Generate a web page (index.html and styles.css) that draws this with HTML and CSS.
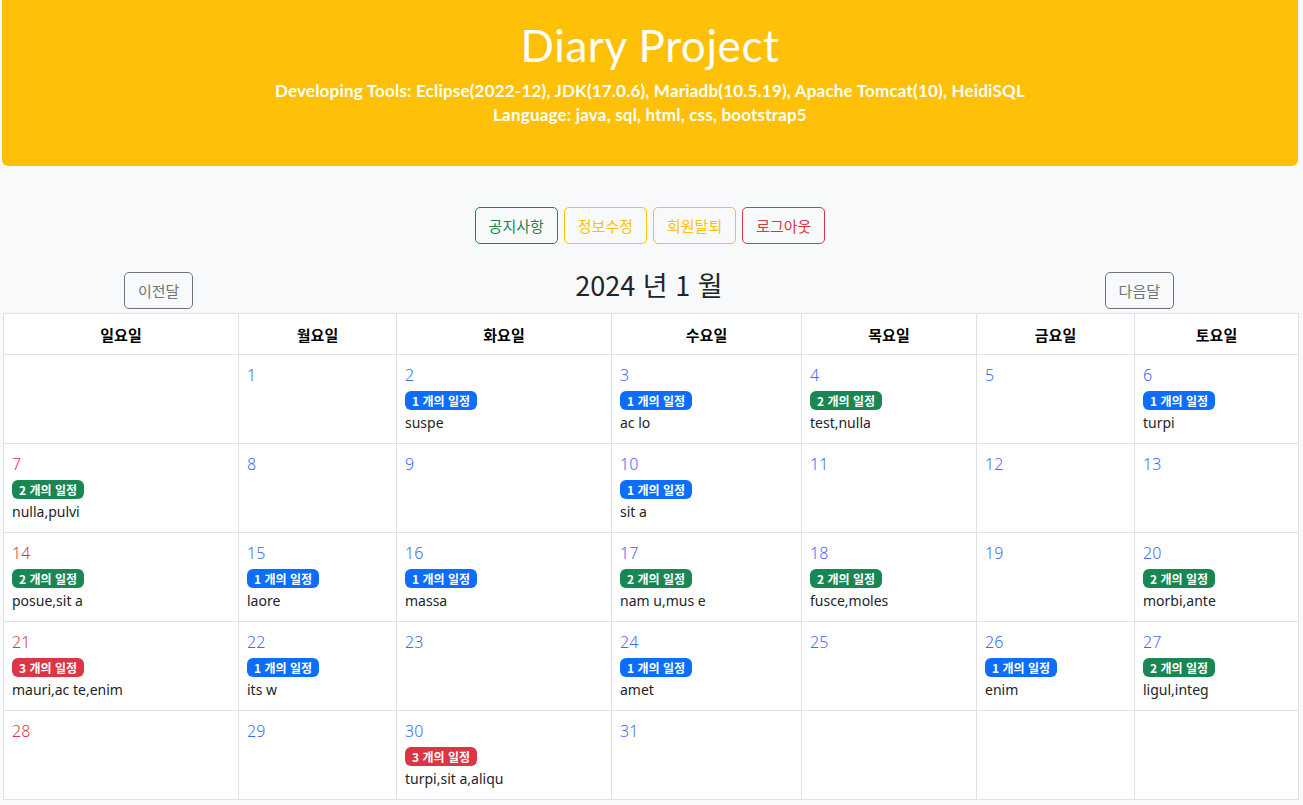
FILE: index.html
```html
<!DOCTYPE html>
<html lang="ko">
<head>
<meta charset="utf-8">
<title>Diary Project</title>
<link rel="stylesheet" href="styles.css">
</head>
<body>
<div class="page">
  <header class="banner">
    <h1 class="banner-title">Diary Project</h1>
    <p class="banner-line">Developing Tools: Eclipse(2022-12), JDK(17.0.6), Mariadb(10.5.19), Apache Tomcat(10), HeidiSQL</p>
    <p class="banner-line">Language: java, sql, html, css, bootstrap5</p>
  </header>

  <nav class="actions">
    <a class="btn btn-success">공지사항</a>
    <a class="btn btn-warning">정보수정</a>
    <a class="btn btn-warning">회원탈퇴</a>
    <a class="btn btn-danger">로그아웃</a>
  </nav>

  <div class="month-bar">
    <div class="month-side"><a class="btn btn-secondary">이전달</a></div>
    <h2 class="month-title">2024 년 1 월</h2>
    <div class="month-side"><a class="btn btn-secondary">다음달</a></div>
  </div>

  <table class="cal">
    <colgroup>
      <col class="c1"><col class="c2"><col class="c3"><col class="c4"><col class="c5"><col class="c6"><col class="c7">
    </colgroup>
    <thead>
      <tr><th>일요일</th><th>월요일</th><th>화요일</th><th>수요일</th><th>목요일</th><th>금요일</th><th>토요일</th></tr>
    </thead>
    <tbody>
      <tr>
        <td></td>
        <td><div class="day">1</div></td>
        <td><div class="day">2</div><span class="badge b-blue">1 개의 일정</span><div class="memo">suspe</div></td>
        <td><div class="day">3</div><span class="badge b-blue">1 개의 일정</span><div class="memo">ac lo</div></td>
        <td><div class="day">4</div><span class="badge b-green">2 개의 일정</span><div class="memo">test,nulla</div></td>
        <td><div class="day">5</div></td>
        <td><div class="day">6</div><span class="badge b-blue">1 개의 일정</span><div class="memo">turpi</div></td>
      </tr>
      <tr>
        <td><div class="day sun">7</div><span class="badge b-green">2 개의 일정</span><div class="memo">nulla,pulvi</div></td>
        <td><div class="day">8</div></td>
        <td><div class="day">9</div></td>
        <td><div class="day">10</div><span class="badge b-blue">1 개의 일정</span><div class="memo">sit a</div></td>
        <td><div class="day">11</div></td>
        <td><div class="day">12</div></td>
        <td><div class="day">13</div></td>
      </tr>
      <tr>
        <td><div class="day sun">14</div><span class="badge b-green">2 개의 일정</span><div class="memo">posue,sit a</div></td>
        <td><div class="day">15</div><span class="badge b-blue">1 개의 일정</span><div class="memo">laore</div></td>
        <td><div class="day">16</div><span class="badge b-blue">1 개의 일정</span><div class="memo">massa</div></td>
        <td><div class="day">17</div><span class="badge b-green">2 개의 일정</span><div class="memo">nam u,mus e</div></td>
        <td><div class="day">18</div><span class="badge b-green">2 개의 일정</span><div class="memo">fusce,moles</div></td>
        <td><div class="day">19</div></td>
        <td><div class="day">20</div><span class="badge b-green">2 개의 일정</span><div class="memo">morbi,ante</div></td>
      </tr>
      <tr>
        <td><div class="day sun">21</div><span class="badge b-red">3 개의 일정</span><div class="memo">mauri,ac te,enim</div></td>
        <td><div class="day">22</div><span class="badge b-blue">1 개의 일정</span><div class="memo">its w</div></td>
        <td><div class="day">23</div></td>
        <td><div class="day">24</div><span class="badge b-blue">1 개의 일정</span><div class="memo">amet</div></td>
        <td><div class="day">25</div></td>
        <td><div class="day">26</div><span class="badge b-blue">1 개의 일정</span><div class="memo">enim</div></td>
        <td><div class="day">27</div><span class="badge b-green">2 개의 일정</span><div class="memo">ligul,integ</div></td>
      </tr>
      <tr>
        <td><div class="day sun">28</div></td>
        <td><div class="day">29</div></td>
        <td><div class="day">30</div><span class="badge b-red">3 개의 일정</span><div class="memo">turpi,sit a,aliqu</div></td>
        <td><div class="day">31</div></td>
        <td></td>
        <td></td>
        <td></td>
      </tr>
    </tbody>
  </table>
</div>
</body>
</html>
```

FILE: styles.css
```css
* { box-sizing: border-box; }
html, body {
  margin: 0;
  padding: 0;
  background: #f8f9fa;
  font-family: "Noto Sans", "Noto Sans CJK KR", sans-serif;
  color: #212529;
}
.page {
  padding: 0 5px 0 2px;
}
.banner {
  background: #ffc107;
  border-radius: 0 0 6px 6px;
  height: 166px;
  text-align: center;
  color: #fff;
  padding-top: 17px;
  font-family: "Lato", "Noto Sans CJK KR", sans-serif;
}
.banner-title {
  margin: 0 0 6px 0;
  font-size: 44px;
  font-weight: 400;
  line-height: 56px;
  letter-spacing: 0.6px;
}
.banner-line {
  margin: 0;
  font-size: 17px;
  font-weight: 700;
  line-height: 24px;
  letter-spacing: 0.2px;
}
.actions {
  display: flex;
  justify-content: center;
  gap: 6px;
  margin-top: 41px;
}
.btn {
  display: inline-block;
  font-family: "Noto Sans CJK KR", sans-serif;
  font-size: 15px;
  line-height: 35px;
  height: 37px;
  padding: 0 13px;
  border: 1px solid;
  border-radius: 5px;
  background: transparent;
  text-decoration: none;
}
.btn-success { color: #198754; border-color: #198754; }
.btn-warning { color: #ffc107; border-color: #ffc107; }
.btn-danger { color: #dc3545; border-color: #dc3545; }
.btn-secondary { color: #6c757d; border-color: #6c757d; }
.month-bar {
  display: flex;
  align-items: flex-end;
  justify-content: space-between;
  margin-top: 28px;
  height: 37px;
  padding: 0 124px 0 122px;
}
.month-side { flex: 0 0 auto; }
.month-title {
  margin: 0 0 6px 0;
  font-family: "Noto Sans CJK KR", sans-serif;
  font-size: 27px;
  font-weight: 400;
  line-height: 36px;
}
.cal {
  margin-top: 4px;
  margin-left: 1px;
  width: 1295px;
  table-layout: fixed;
  border-collapse: collapse;
  background: #fff;
}
.c1 { width: 235px; }
.c2 { width: 158px; }
.c3 { width: 215px; }
.c4 { width: 190px; }
.c5 { width: 175px; }
.c6 { width: 158px; }
.c7 { width: 164px; }
.cal th, .cal td {
  border: 1px solid #dee2e6;
}
.cal th {
  height: 41px;
  font-family: "Noto Sans CJK KR", sans-serif;
  font-size: 15px;
  font-weight: 700;
  text-align: center;
  color: #000;
}
.cal td {
  height: 89px;
  vertical-align: top;
  padding: 8px 8px;
}
.day {
  font-size: 16px;
  font-weight: 300;
  line-height: 24px;
  color: #3f6af5;
}
.day.sun { color: #dc3545; }
.badge {
  display: inline-block;
  margin-top: 4px;
  height: 19px;
  line-height: 19px;
  padding: 0 7px;
  border-radius: 6px;
  font-family: "Noto Sans CJK KR", sans-serif;
  font-size: 12px;
  font-weight: 700;
  color: #fff;
}
.b-blue { background: #0d6efd; }
.b-green { background: #198754; }
.b-red { background: #dc3545; }
.memo {
  font-size: 14px;
  line-height: 24px;
  color: #212529;
}
```
